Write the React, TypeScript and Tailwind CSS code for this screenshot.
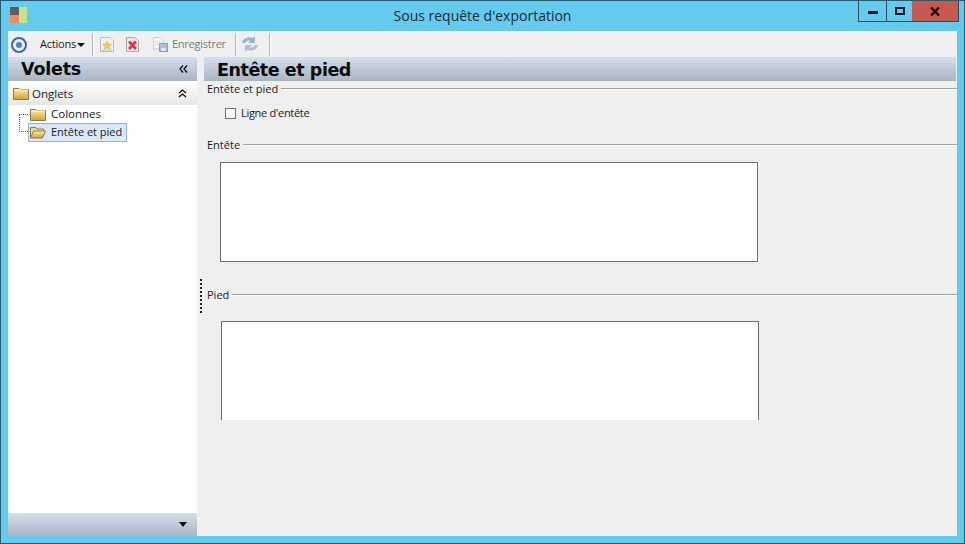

const ui = "font-['Open_Sans','Noto_Sans',sans-serif]";

function Folder({ open = false }: { open?: boolean }) {
  return (
    <svg width="16" height="13" viewBox="0 0 16 13" className="shrink-0">
      <defs>
        <linearGradient id="fg" x1="0" y1="0" x2="0" y2="1">
          <stop offset="0" stopColor="#fdeeb0" />
          <stop offset="1" stopColor="#d99f2e" />
        </linearGradient>
      </defs>
      {open ? (
        <>
          <path d="M0.500 12V1.500H6L7 3H13.500V5" fill="#f3dc94" stroke="#8d7a4d" />
          <path d="M0.500 12L3.500 5H15.500L12.500 12Z" fill="url(#fg)" stroke="#8d7a4d" />
        </>
      ) : (
        <>
          <path d="M0.500 12.500V1.500H6L7 2.500H15.500V12.500Z" fill="url(#fg)" stroke="#8d7a4d" />
          <path d="M1 3H15" stroke="#fff8d8" />
        </>
      )}
    </svg>
  );
}

function Sep() {
  return <div className="w-px h-[23px] bg-[#b4b4b4] border-r border-white box-content" />;
}

function SectionLabel({ label, className }: { label: string; className: string }) {
  return (
    <div className={`flex items-center gap-[3px] pl-[3px] text-[11px] leading-[16px] text-[#1a1a1a] ${className}`}>
      <span>{label}</span>
      <div className="flex-1 h-px bg-[#a0a0a0] border-b border-white box-content" />
    </div>
  );
}

export default function App() {
  return (
    <div className={`w-[965px] h-[544px] overflow-hidden bg-[#65cbee] border border-[#2a5a70] flex flex-col ${ui}`}>
      {/* Title bar */}
      <div className="h-[30px] shrink-0 flex justify-between relative">
        <div className="w-[17px] h-[16px] ml-[9px] mt-[6px] grid grid-cols-2 grid-rows-2">
          <div className="bg-[#5f5f5f]" />
          <div className="row-span-2 bg-[#c6e38c]" />
          <div className="bg-[#f08a5c]" />
        </div>
        <div className="absolute inset-x-0 top-0 text-center text-[14px] leading-[30px] text-[#1c2a33]">Sous requête d'exportation</div>
        <div className="flex h-[21px] mr-[5px] border border-t-0 border-[#2f4a5a] relative">
          <div className="w-[28px] flex items-center justify-center border-r border-[#2f4a5a]">
            <div className="w-[10px] h-[3px] bg-[#0c1a22] mt-[3px]" />
          </div>
          <div className="w-[25px] flex items-center justify-center">
            <div className="w-[10px] h-[8px] border-2 border-[#0c1a22]" />
          </div>
          <div className="w-[46px] bg-[#c75a50] flex items-center justify-center">
            <svg width="10" height="9" viewBox="0 0 10 9"><path d="M1 0.500L9 8.500M9 0.500L1 8.500" stroke="#1a0a08" strokeWidth="2.400" /></svg>
          </div>
        </div>
      </div>

      {/* Client area */}
      <div className="mx-[7px] w-[949px] h-[505px] bg-[#efefef] flex flex-col">
        {/* Toolbar */}
        <div className="h-[26px] shrink-0 flex items-center text-[11px] text-[#1a1a1a]">
          <svg width="18" height="18" viewBox="0 0 18 18" className="ml-[1px]">
            <circle cx="10" cy="10" r="7" fill="#eef3fb" stroke="#3a66b4" strokeWidth="2" />
            <circle cx="10" cy="10" r="3" fill="#4f7fca" />
          </svg>
          <span className="ml-[13px] w-[35px] whitespace-nowrap tracking-[-0.2px]">Actions</span>
          <svg width="8" height="4" viewBox="0 0 8 4" className="ml-[2px] mt-[2px]"><path d="M0 0H8L4 4Z" fill="#111" /></svg>
          <div className="ml-[7px]"><Sep /></div>
          <svg width="16" height="17" viewBox="0 0 16 17" className="ml-[5px]">
            <path d="M1.500 1.500H11L14.500 5V15.500H1.500Z" fill="#eef1f8" stroke="#b3bccf" />
            <path d="M3 14H13" stroke="#c6cede" />
            <path d="M8 5L9.300 8L12.500 8.300L10 10.300L10.800 13.500L8 11.800L5.200 13.500L6 10.300L3.500 8.300L6.700 8Z" fill="#f0cf3c" stroke="#d7ae2a" strokeWidth="0.500" />
          </svg>
          <svg width="15" height="17" viewBox="0 0 15 17" className="ml-[10px]">
            <path d="M1.500 1.500H10L13.500 5V15.500H1.500Z" fill="#efe6ea" stroke="#b0a8bc" />
            <path d="M4 5.500L11 13M11 5.500L4 13" stroke="#d8343a" strokeWidth="2.600" />
          </svg>
          <svg width="17" height="17" viewBox="0 0 17 17" className="ml-[12px]">
            <path d="M1.500 1.500H8L11 4V13H1.500Z" fill="#f1f3f8" stroke="#c6cfdf" />
            <path d="M3 6H9M3 8.500H9" stroke="#d4dbe8" />
            <rect x="7.500" y="7.500" width="8" height="8" fill="#b3bfd8" stroke="#8f9dbd" />
            <rect x="9.500" y="12" width="4" height="3" fill="#e6eaf3" />
          </svg>
          <span className="ml-[3px] text-[#7c7c7c] w-[54px] whitespace-nowrap tracking-[-0.25px]">Enregistrer</span>
          <div className="ml-[9px]"><Sep /></div>
          <svg width="18" height="18" viewBox="0 0 18 18" className="ml-[4px]">
            <path d="M1 8C2 3.500 7 1 11.500 3L14 1V8H7L9.500 5.700C7 5 5 6 4 8Z" fill="#9cb4d0" />
            <path d="M17 10C16 14.500 11 17 6.500 15L4 17V10H11L8.500 12.300C11 13 13 12 14 10Z" fill="#aebfd6" />
          </svg>
          <div className="ml-[10px]"><Sep /></div>
        </div>

        <div className="flex-1 flex min-h-0">
          {/* Left panel */}
          <div className="w-[189px] shrink-0 flex flex-col">
            <div className="h-[24px] shrink-0 flex items-center justify-between pl-[13px] pr-[9px] bg-gradient-to-b from-[#d3e0ee] to-[#aab5c2]">
              <span className="font-['DejaVu_Sans',sans-serif] font-bold text-[17.500px] leading-[26px] tracking-[-0.2px] text-[#0c0c0c]">Volets</span>
              <svg width="9" height="8" viewBox="0 0 9 8"><path d="M4 0.500L1 4L4 7.500M8 0.500L5 4L8 7.500" fill="none" stroke="#111" strokeWidth="1.300" /></svg>
            </div>
            <div className="h-[24px] shrink-0 flex items-center justify-between pl-[5px] pr-[10px] bg-gradient-to-b from-white to-[#e6e6e6] text-[11.500px] text-[#1a1a1a]">
              <span className="flex items-center gap-[3px]"><Folder /><span className="mt-[1px]">Onglets</span></span>
              <svg width="9" height="9" viewBox="0 0 9 9"><path d="M1 4L4.500 1L8 4M1 8L4.500 5L8 8" fill="none" stroke="#111" strokeWidth="1.300" /></svg>
            </div>
            <div className="flex-1 bg-white text-[11.500px] text-[#1a1a1a] relative">
              <div className="absolute left-[11px] top-[9px] w-[9px] h-[18px] border-l border-b border-dotted border-[#555]" />
              <div className="absolute left-[11px] top-[9px] w-[9px] border-t border-dotted border-[#555]" />
              <div className="flex items-center gap-[5px] h-[18px] ml-[22px]">
                <Folder /><span>Colonnes</span>
              </div>
              <div className="flex items-center gap-[5px] h-[19px] ml-[20px] w-[99px] pl-[1px] bg-[#d9e9f9] border border-[#8fb5da]">
                <Folder open /><span className="whitespace-nowrap text-[11px]">Entête et pied</span>
              </div>
            </div>
            <div className="h-[23px] shrink-0 flex items-center justify-end pr-[10px] bg-gradient-to-b from-[#d3e0ee] to-[#aab5c2]">
              <svg width="8" height="5" viewBox="0 0 8 5"><path d="M0 0H8L4 5Z" fill="#111" /></svg>
            </div>
          </div>

          {/* Splitter */}
          <div className="w-[7px] shrink-0 flex items-start justify-center pt-[222px]">
            <div className="h-[34px] border-l-2 border-dotted border-[#222]" />
          </div>

          {/* Right panel */}
          <div className="flex-1 min-w-0 flex flex-col">
            <div className="h-[24px] shrink-0 pl-[13px] mr-[1px] bg-gradient-to-b from-[#d3e0ee] to-[#aab5c2] font-['DejaVu_Sans',sans-serif] font-bold text-[17.500px] leading-[26px] tracking-[-0.45px] text-[#0c0c0c]">
              Entête et pied
            </div>
            <div className="h-[339px] overflow-hidden text-[#1a1a1a]">
              <SectionLabel label="Entête et pied" className="h-[16px]" />
              <label className="flex items-center h-[16px] mt-[8px] ml-[21px] text-[11px] tracking-[-0.3px] gap-[5px]">
                <span className="w-[11px] h-[11px] border border-[#707070] bg-white" />
                Ligne d'entête
              </label>
              <SectionLabel label="Entête" className="h-[16px] mt-[16px]" />
              <div className="w-[538px] h-[100px] ml-[16px] mt-[9px] bg-white border border-[#6e6e6e]" />
              <SectionLabel label="Pied" className="h-[16px] mt-[25px]" />
              <div className="w-[538px] h-[120px] ml-[17px] mt-[18px] bg-white border border-[#6e6e6e]" />
            </div>
          </div>
        </div>
      </div>
    </div>
  );
}
